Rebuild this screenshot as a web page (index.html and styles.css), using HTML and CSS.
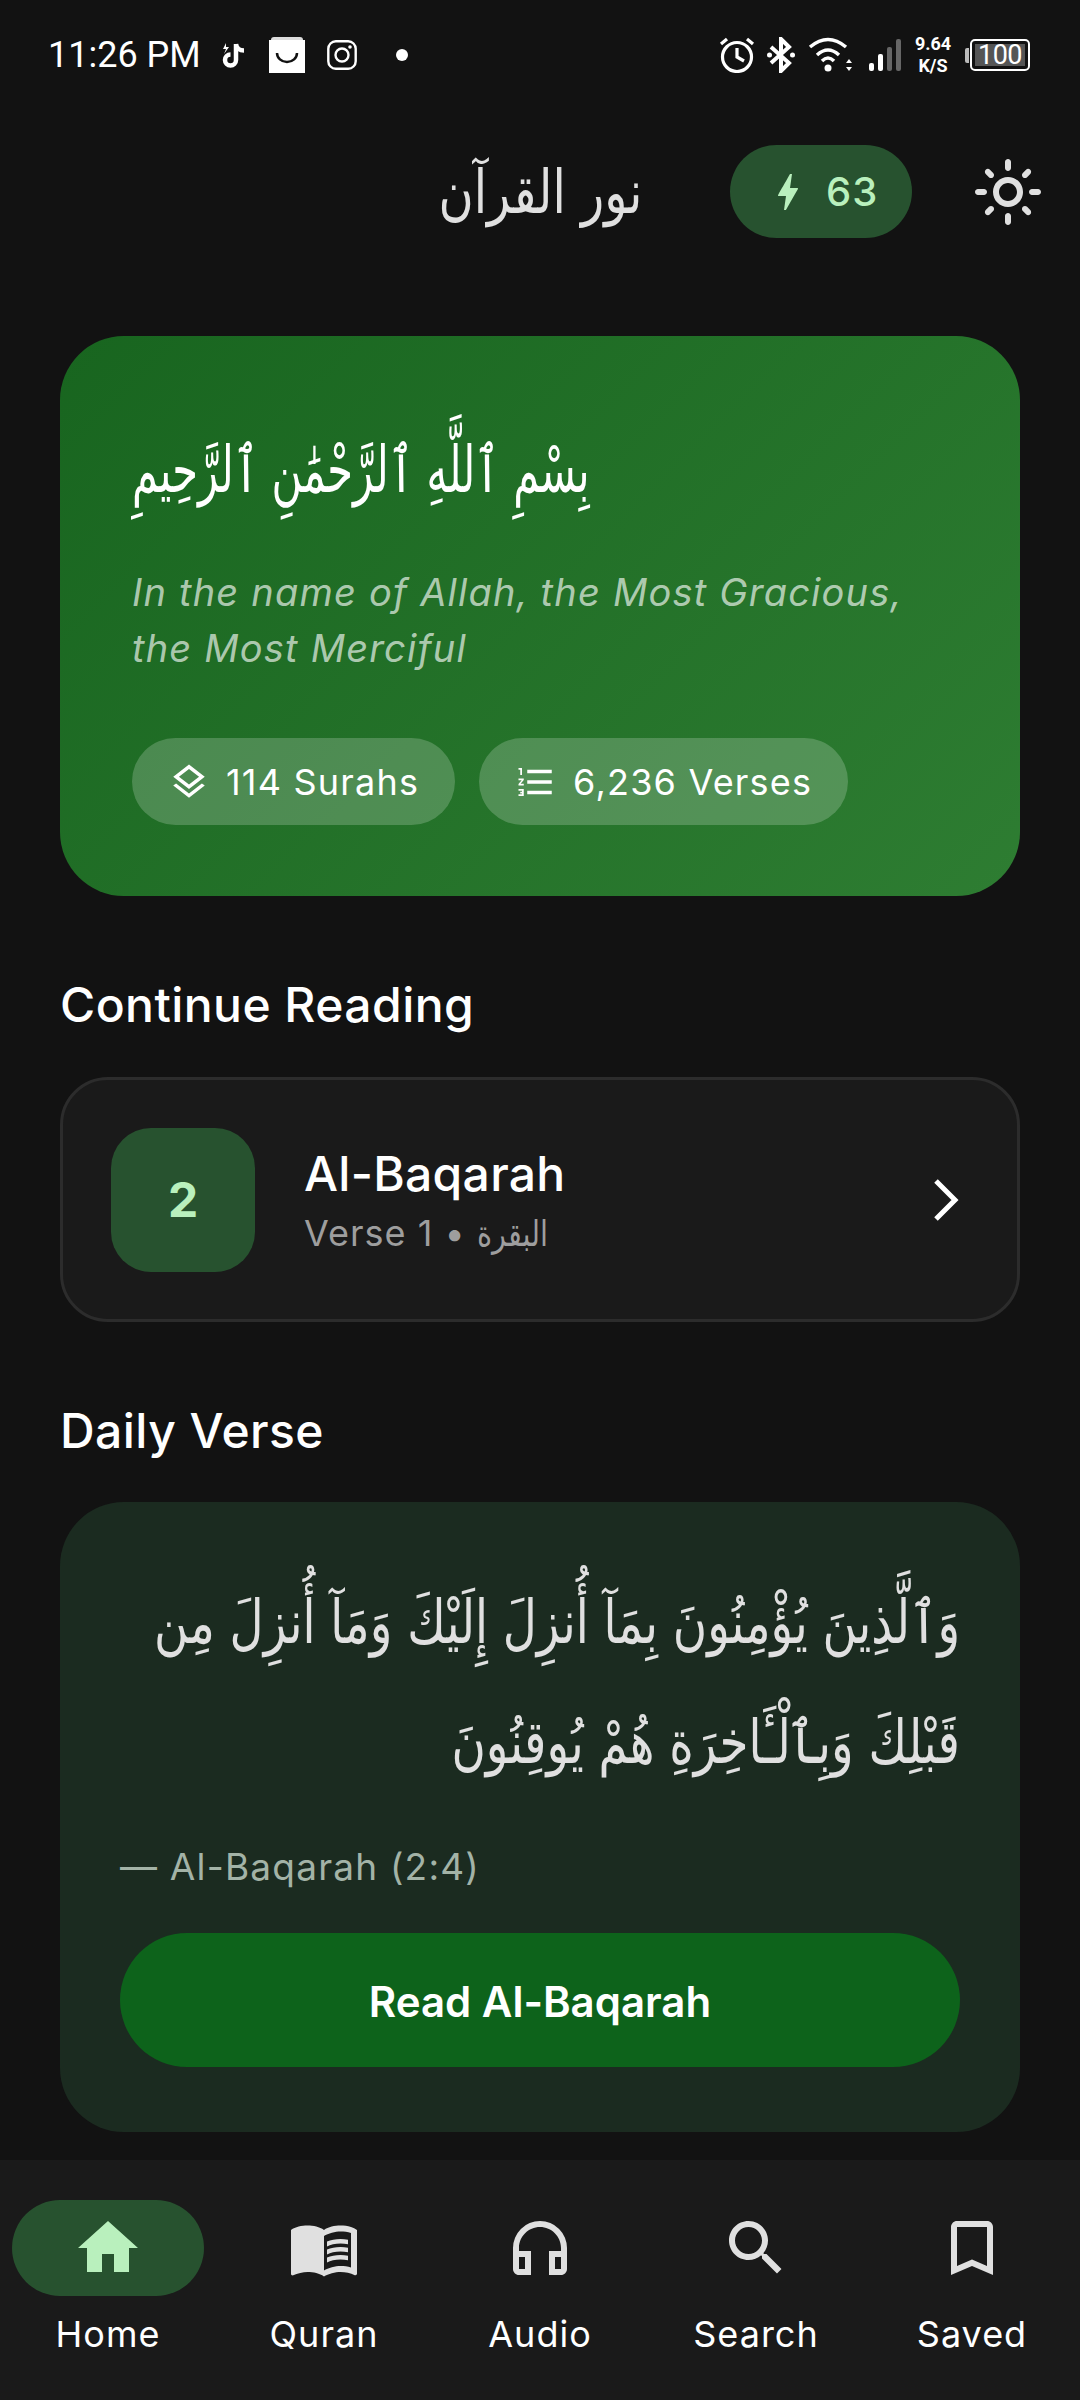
FILE: index.html
```html
<!DOCTYPE html>
<html lang="en">
  <head>
    <meta charset="UTF-8" />
    <meta name="viewport" content="width=device-width, initial-scale=1.0" />
    <link rel="stylesheet" href="styles.css">
    <title>Noor Al-Quran</title>
  </head>
  <body>
    <div class="statusBar">
      <div class="statusLeft">
        <span class="clock">11:26 PM</span>
        <svg class="tiktokIcon" viewBox="0 0 24 26"><path d="M14 2v16a5.500 5.500 0 1 1-5.500-5.500M14 2c.5 4 3.500 6.500 8 6.500" fill="none" stroke="#fff" stroke-width="4.500"/><path d="M4 1L1 7h3L2 12l5-7H4z" fill="#fff"/></svg>
        <svg class="bagIcon" viewBox="0 0 36 36"><path d="M2 3a3 3 0 0 1 3-3h26a3 3 0 0 1 3 3v1H2z" fill="#ddd"/><rect y="3" width="36" height="33" fill="#fff"/><path d="M8 16a10 9 0 0 0 20 0" fill="none" stroke="#111" stroke-width="2.500"/></svg>
        <svg class="instaIcon" viewBox="0 0 30 30"><rect x="1.300" y="1.300" width="27.400" height="27.400" rx="7.500" fill="none" stroke="#fff" stroke-width="2.400"/><circle cx="15" cy="15" r="6.500" fill="none" stroke="#fff" stroke-width="2.400"/><circle cx="23" cy="7" r="1.800" fill="#fff"/></svg>
        <span class="statusDot"></span>
      </div>
      <div class="statusRight">
        <svg class="alarmIcon" viewBox="0 0 36 36"><circle cx="18" cy="20" r="14.500" fill="none" stroke="#fff" stroke-width="3.200"/><path d="M18 11v9l7 4M2 7l6-5M34 7l-6-5" fill="none" stroke="#fff" stroke-width="3.200"/></svg>
        <svg class="btIcon" viewBox="0 0 28 36"><path d="M4 10l18 16-8 8V2l8 8L4 26" fill="none" stroke="#fff" stroke-width="4"/><circle cx="2.500" cy="18" r="2.500" fill="#fff"/><circle cx="25.500" cy="18" r="2.500" fill="#fff"/></svg>
        <svg class="wifiIcon" viewBox="0 0 44 36"><path d="M2 10Q20-5 38 10M9 18Q20 8 31 18" fill="none" stroke="#fff" stroke-width="3.500"/><path d="M14 24Q20 18 26 24" fill="none" stroke="#fff" stroke-width="3.500"/><circle cx="20" cy="31" r="3.500" fill="#fff"/><path d="M38 26l3-4 3 4zM38 30l3 4 3-4z" fill="#fff"/></svg>
        <svg class="signalIcon" viewBox="0 0 32 32"><rect y="24" width="5" height="8" rx="2" fill="#fff"/><rect x="9" y="15" width="5" height="17" rx="2" fill="#fff"/><rect x="18" y="8" width="5" height="24" rx="2" fill="#666"/><rect x="27" width="5" height="32" rx="2" fill="#666"/></svg>
        <div class="netSpeed"><span>9.64</span><span>K/S</span></div>
        <div class="battery">
          <span class="batteryNub"></span>
          <div class="batteryBody"><span class="batteryFill">100</span></div>
        </div>
      </div>
    </div>

    <header class="appBar">
      <h1 class="appTitle" lang="ar" dir="rtl"><span>نور القرآن</span></h1>
      <div class="streakPill">
        <svg class="boltIcon" viewBox="0 0 24 24"><path d="M11 21h-1l1-7H7.500c-.580 0-.570-.320-.380-.660.190-.340.050-.080.070-.120C8.480 10.940 10.420 7.540 13 3h1l-1 7h3.500c.490 0 .560.330.470.510l-.070.150C12.960 17.550 11 21 11 21z"/></svg>
        <span>63</span>
      </div>
      <svg class="sunIcon" viewBox="0 0 24 24"><path d="M12 9c1.650 0 3 1.350 3 3s-1.350 3-3 3-3-1.350-3-3 1.350-3 3-3m0-2c-2.760 0-5 2.240-5 5s2.240 5 5 5 5-2.240 5-5-2.240-5-5-5zM2 13h2c.550 0 1-.450 1-1s-.450-1-1-1H2c-.550 0-1 .450-1 1s.450 1 1 1zm18 0h2c.550 0 1-.450 1-1s-.450-1-1-1h-2c-.550 0-1 .450-1 1s.450 1 1 1zM11 2v2c0 .550.450 1 1 1s1-.450 1-1V2c0-.550-.450-1-1-1s-1 .450-1 1zm0 18v2c0 .550.450 1 1 1s1-.450 1-1v-2c0-.550-.450-1-1-1s-1 .450-1 1zM5.990 4.580c-.390-.390-1.030-.390-1.410 0-.390.390-.390 1.030 0 1.410l1.060 1.060c.390.390 1.030.390 1.410 0s.390-1.030 0-1.410L5.990 4.580zm12.370 12.370c-.390-.390-1.030-.390-1.410 0-.390.390-.390 1.030 0 1.410l1.060 1.060c.390.390 1.030.390 1.410 0 .390-.390.390-1.030 0-1.410l-1.060-1.060zm1.060-10.960c.390-.390.390-1.030 0-1.410-.390-.390-1.030-.390-1.410 0l-1.060 1.060c-.390.390-.390 1.030 0 1.410s1.030.390 1.410 0l1.060-1.060zM7.050 18.360c.390-.390.390-1.030 0-1.410-.390-.390-1.030-.390-1.410 0l-1.060 1.060c-.390.390-.390 1.030 0 1.410s1.030.390 1.410 0l1.060-1.060z"/></svg>
    </header>

    <main class="content">
      <section class="heroCard">
        <p class="bismillah" lang="ar" dir="rtl"><span>بِسْمِ ٱللَّهِ ٱلرَّحْمَٰنِ ٱلرَّحِيمِ</span></p>
        <p class="heroMeaning">In the name of Allah, the Most Gracious, the Most Merciful</p>
        <div class="heroStats">
          <div class="statPill">
            <svg class="statIcon" viewBox="0 0 24 24"><path d="M11.990 18.540l-7.370-5.730L3 14.070l9 7 9-7-1.630-1.270zM12 16l7.360-5.730L21 9l-9-7-9 7 1.630 1.270L12 16zm0-11.470L17.740 9 12 13.470 6.260 9 12 4.530z"/></svg>
            <span>114 Surahs</span>
          </div>
          <div class="statPill">
            <svg class="statIcon" viewBox="0 0 24 24"><path d="M2 17h2v.500H3v1h1v.500H2v1h3v-4H2v1zm1-9h1V4H2v1h1v3zm-1 3h1.800L2 13.100v.900h3v-1H3.200L5 10.900V10H2v1zm5-6v2h14V5H7zm0 14h14v-2H7v2zm0-6h14v-2H7v2z"/></svg>
            <span>6,236 Verses</span>
          </div>
        </div>
      </section>

      <h2 class="sectionTitle">Continue Reading</h2>
      <section class="continueCard">
        <div class="surahBadge">2</div>
        <div class="surahInfo">
          <div class="surahName">Al-Baqarah</div>
          <div class="surahMeta">Verse 1 • <span class="surahArabic" lang="ar">البقرة</span></div>
        </div>
        <svg class="chevronIcon" viewBox="0 0 72 72"><path d="M27 17l19 19-19 19" fill="none" stroke="#fff" stroke-width="5"/></svg>
      </section>

      <h2 class="sectionTitle">Daily Verse</h2>
      <section class="verseCard">
        <p class="verseText" lang="ar" dir="rtl">
          <span>وَٱلَّذِينَ يُؤْمِنُونَ بِمَآ أُنزِلَ إِلَيْكَ وَمَآ أُنزِلَ مِن</span>
          <span>قَبْلِكَ وَبِٱلْـَٔاخِرَةِ هُمْ يُوقِنُونَ</span>
        </p>
        <p class="verseRef">— Al-Baqarah (2:4)</p>
        <button type="button" class="readBtn">Read Al-Baqarah</button>
      </section>
    </main>

    <nav class="bottomNav">
      <div class="navItem active">
        <div class="navIconWrap"><svg class="navIcon" viewBox="0 0 24 24"><path d="M10 20v-6h4v6h5v-8h3L12 3 2 12h3v8z"/></svg></div>
        <span class="navLabel">Home</span>
      </div>
      <div class="navItem">
        <div class="navIconWrap"><svg class="navIcon" viewBox="0 0 24 24"><path d="M21 5c-1.110-.350-2.330-.500-3.500-.500-1.950 0-4.050.400-5.500 1.500-1.450-1.100-3.550-1.500-5.500-1.500S2.450 4.900 1 6v14.650c0 .250.250.500.500.500.100 0 .150-.050.250-.050C3.100 20.450 5.050 20 6.500 20c1.950 0 4.050.400 5.500 1.500 1.350-.850 3.800-1.500 5.500-1.500 1.650 0 3.350.300 4.750 1.050.100.050.150.050.250.050.250 0 .500-.250.500-.500V6c-.600-.450-1.250-.750-2-1zm0 13.500c-1.100-.350-2.300-.500-3.500-.500-1.700 0-4.150.650-5.500 1.500V8c1.350-.850 3.800-1.500 5.500-1.500 1.200 0 2.400.150 3.500.500v11.500z"/><path d="M17.500 10.500c.880 0 1.730.090 2.500.260V9.240c-.790-.150-1.640-.240-2.500-.240-1.700 0-3.240.290-4.500.830v1.660c1.130-.640 2.700-.990 4.500-.990zM13 12.490v1.660c1.130-.640 2.700-.990 4.500-.990.880 0 1.730.090 2.500.260V11.900c-.790-.150-1.640-.240-2.500-.240-1.700 0-3.240.300-4.500.830zM17.500 14.330c-1.700 0-3.240.290-4.500.830v1.660c1.130-.640 2.700-.990 4.500-.990.880 0 1.730.090 2.500.260v-1.520c-.790-.160-1.640-.240-2.500-.240z"/></svg></div>
        <span class="navLabel">Quran</span>
      </div>
      <div class="navItem">
        <div class="navIconWrap"><svg class="navIcon" viewBox="0 0 24 24"><path d="M12 3a9 9 0 0 0-9 9v7c0 1.100.900 2 2 2h4v-8H5v-1c0-3.870 3.130-7 7-7s7 3.130 7 7v1h-4v8h4c1.100 0 2-.900 2-2v-7a9 9 0 0 0-9-9zM7 15v4H5v-4h2zm12 4h-2v-4h2v4z"/></svg></div>
        <span class="navLabel">Audio</span>
      </div>
      <div class="navItem">
        <div class="navIconWrap"><svg class="navIcon" viewBox="0 0 24 24"><path d="M15.500 14h-.790l-.280-.270C15.410 12.590 16 11.110 16 9.500 16 5.910 13.090 3 9.500 3S3 5.910 3 9.500 5.910 16 9.500 16c1.610 0 3.090-.590 4.230-1.570l.270.280v.790l5 4.990L20.490 19l-4.990-5zm-6 0C7.010 14 5 11.990 5 9.500S7.010 5 9.500 5 14 7.010 14 9.500 11.990 14 9.500 14z"/></svg></div>
        <span class="navLabel">Search</span>
      </div>
      <div class="navItem">
        <div class="navIconWrap"><svg class="navIcon" viewBox="0 0 24 24"><path d="M17 3H7c-1.100 0-2 .900-2 2v16l7-3 7 3V5c0-1.100-.900-2-2-2zm0 15l-5-2.180L7 18V5h10v13z"/></svg></div>
        <span class="navLabel">Saved</span>
      </div>
    </nav>
  </body>
</html>
```
FILE: styles.css
```css
* {
  box-sizing: border-box;
}

body {
  width: 1080px;
  height: 2400px;
  margin: 0;
  overflow: hidden;
  display: flex;
  flex-direction: column;
  background-color: #121212;
  color: #fff;
  font-family: Inter, "DejaVu Sans", sans-serif;
}

p,
h1,
h2 {
  margin: 0;
  font-weight: 400;
}

/* status bar */
.statusBar {
  height: 110px;
  flex-shrink: 0;
  display: flex;
  align-items: center;
  justify-content: space-between;
  padding: 0 50px 0 48px;
  font-family: Roboto, sans-serif;
}

.statusLeft,
.statusRight {
  display: flex;
  align-items: center;
}

.clock {
  font-size: 36px;
  width: 174px;
}

.tiktokIcon {
  width: 24px;
  height: 26px;
}

.bagIcon {
  width: 36px;
  height: 36px;
  margin-left: 23px;
}

.instaIcon {
  width: 30px;
  height: 30px;
  margin-left: 22px;
}

.statusDot {
  width: 12px;
  height: 12px;
  margin-left: 39px;
  border-radius: 50%;
  background-color: #fff;
}

.alarmIcon {
  width: 36px;
  height: 36px;
}

.btIcon {
  width: 28px;
  height: 36px;
  margin-left: 12px;
}

.wifiIcon {
  width: 44px;
  height: 36px;
  margin-left: 13px;
}

.signalIcon {
  width: 32px;
  height: 32px;
  margin-left: 17px;
}

.netSpeed {
  display: flex;
  flex-direction: column;
  align-items: center;
  width: 40px;
  margin-left: 12px;
  font-size: 18px;
  font-weight: 700;
  line-height: 22px;
}

.battery {
  display: flex;
  align-items: center;
  margin-left: 12px;
}

.batteryNub {
  width: 4px;
  height: 15px;
  margin-right: 1px;
  border-radius: 2px 0 0 2px;
  background-color: #bbb;
}

.batteryBody {
  width: 60px;
  height: 32px;
  padding: 3px;
  border: 2px solid #fff;
  border-radius: 5px;
  display: flex;
}

.batteryFill {
  flex: 1;
  background-color: #555;
  font-size: 27px;
  line-height: 22px;
  text-align: center;
  letter-spacing: -0.500px;
}

/* app bar */
.appBar {
  height: 166px;
  flex-shrink: 0;
  display: flex;
  align-items: center;
  padding: 0 0 3px 428px;
}

.appTitle {
  width: 240px;
  text-align: center;
  font-family: "DejaVu Sans", serif;
  font-size: 60px;
  color: #e0e0e0;
}

/* the only Arabic face on hand runs wider than the naskh in the design */
.appTitle span {
  display: inline-block;
  white-space: nowrap;
  transform: scaleX(0.8);
}

.streakPill {
  width: 182px;
  height: 93px;
  margin-left: 62px;
  display: flex;
  align-items: center;
  gap: 14px;
  padding-left: 34px;
  border-radius: 47px;
  background-color: #27522f;
  color: #b9f0bd;
  font-size: 40px;
  font-weight: 500;
  letter-spacing: 1px;
}

.boltIcon {
  width: 48px;
  height: 48px;
  fill: #b9f0bd;
}

.sunIcon {
  width: 72px;
  height: 72px;
  margin-left: 60px;
  fill: #e0e0e0;
}

/* main scroll content */
.content {
  flex: 1;
  padding: 60px 60px 0;
}

.heroCard {
  height: 560px;
  padding: 68px 72px 0;
  border-radius: 64px;
  background: linear-gradient(135deg, #18651f, #2e7d32);
}

.bismillah {
  height: 132px;
  display: flex;
  justify-content: flex-end;
  font-family: "DejaVu Sans", serif;
  font-size: 64px;
  line-height: 132px;
}

.bismillah span {
  white-space: nowrap;
  transform: scaleX(0.65);
  transform-origin: left center;
}

.heroMeaning {
  margin-top: 28px;
  width: 780px;
  font-size: 38px;
  font-style: italic;
  line-height: 56px;
  letter-spacing: 1.200px;
  color: rgba(255, 255, 255, 0.65);
}

.heroStats {
  display: flex;
  gap: 24px;
  margin-top: 62px;
}

.statPill {
  height: 87px;
  display: flex;
  align-items: center;
  gap: 16px;
  padding: 0 36px;
  border-radius: 44px;
  background-color: rgba(255, 255, 255, 0.2);
  font-size: 36px;
  letter-spacing: 1.200px;
}

.statIcon {
  width: 42px;
  height: 42px;
  fill: #fff;
}

.sectionTitle {
  margin-top: 79px;
  font-size: 48px;
  font-weight: 500;
  line-height: 60px;
  letter-spacing: 0.450px;
}

.continueCard {
  height: 245px;
  margin-top: 42px;
  display: flex;
  align-items: center;
  padding: 0 48px;
  border: 3px solid #2c2c2c;
  border-radius: 48px;
  background-color: #1a1a1a;
}

.surahBadge {
  width: 144px;
  height: 144px;
  display: flex;
  align-items: center;
  justify-content: center;
  border-radius: 40px;
  background-color: #27522f;
  color: #b9f0bd;
  font-size: 48px;
  font-weight: 700;
}

.surahInfo {
  flex: 1;
  margin-left: 49px;
}

.surahName {
  font-size: 48px;
  font-weight: 500;
  line-height: 60px;
  letter-spacing: 0.300px;
}

.surahMeta {
  margin-top: 7px;
  font-size: 36px;
  line-height: 44px;
  color: #9e9e9e;
  letter-spacing: 1px;
}

.surahArabic {
  display: inline-block;
  transform: scaleX(0.8);
  transform-origin: left center;
}

.chevronIcon {
  width: 72px;
  height: 72px;
  margin-right: -12px;
}

.verseCard {
  height: 630px;
  margin-top: 41px;
  padding: 60px;
  border-radius: 64px;
  background-color: #1b2b20;
}

.verseText {
  height: 240px;
  font-family: "DejaVu Sans", serif;
  font-size: 60px;
  line-height: 120px;
  color: #e0e0e0;
}

.verseText span {
  display: block;
  white-space: nowrap;
  transform: scaleX(0.78);
  transform-origin: right center;
}

.verseRef {
  margin-top: 43px;
  font-size: 37px;
  line-height: 44px;
  color: #a3b3a7;
  letter-spacing: 1.200px;
}

.readBtn {
  display: block;
  width: 100%;
  height: 134px;
  margin-top: 44px;
  border: none;
  border-radius: 67px;
  background-color: #0d631b;
  color: #fff;
  font-family: Inter, sans-serif;
  font-size: 42px;
  font-weight: 600;
  padding-top: 3px;
}

/* bottom nav */
.bottomNav {
  height: 240px;
  flex-shrink: 0;
  display: grid;
  grid-template-columns: repeat(5, 1fr);
  padding-top: 40px;
  background-color: #1a1a1a;
}

.navItem {
  display: flex;
  flex-direction: column;
  align-items: center;
}

.navIconWrap {
  width: 192px;
  height: 96px;
  display: flex;
  align-items: center;
  justify-content: center;
  border-radius: 48px;
}

.navIcon {
  width: 72px;
  height: 72px;
  fill: #e0e0e0;
}

.navLabel {
  margin-top: 16px;
  font-size: 36px;
  line-height: 44px;
  letter-spacing: 1px;
}

.active .navIconWrap {
  background-color: #27522f;
}

.active .navIcon {
  fill: #b9f0bd;
}
```
